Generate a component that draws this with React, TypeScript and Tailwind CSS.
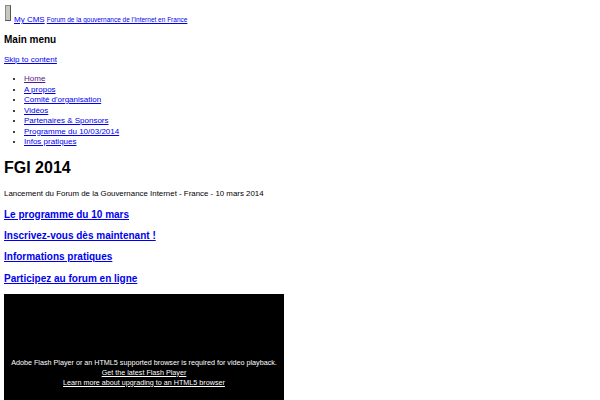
import React from 'react';

const menu = [
  'Home',
  'A propos',
  "Comité d'organisation",
  'Vidéos',
  'Partenaires & Sponsors',
  'Programme du 10/03/2014',
  'Infos pratiques',
];

const features = [
  'Le programme du 10 mars',
  'Inscrivez-vous dès maintenant !',
  'Informations pratiques',
  'Participez au forum en ligne',
];

export default function App() {
  return (
    <div className="w-[600px] h-[400px] overflow-hidden bg-white text-black px-[4px] font-['Liberation_Sans',Arial,sans-serif]">
      {/* Site header */}
      <div className="h-[25px] flex items-end">
        <a href="#" className="flex items-end text-[#0000ee] underline">
          <span className="inline-block w-[6px] h-[16px] mb-[4px] ml-[1px] bg-[#c8c8c0] border border-[#888] border-r-[#555] border-b-[#555]" />
          <span className="ml-[3px] text-[8px] leading-[11px]">My CMS</span>
          <span className="ml-[2px] text-[6.5px] leading-[11px]">Forum de la gouvernance de l'Internet en France</span>
        </a>
      </div>

      <h2 className="mt-[9px] text-[10px] leading-[12px] font-bold">Main menu</h2>
      <a href="#" className="block mt-[9px] text-[8px] leading-[10px] text-[#0000ee] underline w-fit">
        Skip to content
      </a>

      <ul className="mt-[9px] pl-[20px] list-disc text-[8px] leading-[10.5px]">
        {menu.map((item, i) => (
          <li key={item}>
            <a href="#" className={`underline ${i === 0 ? 'text-[#551a8b]' : 'text-[#0000ee]'}`}>
              {item}
            </a>
          </li>
        ))}
      </ul>

      <h1 className="mt-[10px] text-[16px] leading-[20px] font-bold">FGI 2014</h1>
      <p className="mt-[11px] text-[7.9px] leading-[10px]">
        Lancement du Forum de la Gouvernance Internet - France - 10 mars 2014
      </p>

      <div className="mt-[10px] flex flex-col gap-[9.4px]">
        {features.map((f) => (
          <a key={f} href="#" className="block w-fit text-[10px] leading-[12px] font-bold text-[#0000ee] underline">
            {f}
          </a>
        ))}
      </div>

      {/* Video player fallback */}
      <div className="mt-[9px] w-[280px] h-[158px] bg-black flex flex-col items-center pt-[64px] text-white text-[7.2px] leading-[10px]">
        <p>Adobe Flash Player or an HTML5 supported browser is required for video playback.</p>
        <a href="#" className="underline">Get the latest Flash Player</a>
        <a href="#" className="underline">Learn more about upgrading to an HTML5 browser</a>
      </div>
    </div>
  );
}
